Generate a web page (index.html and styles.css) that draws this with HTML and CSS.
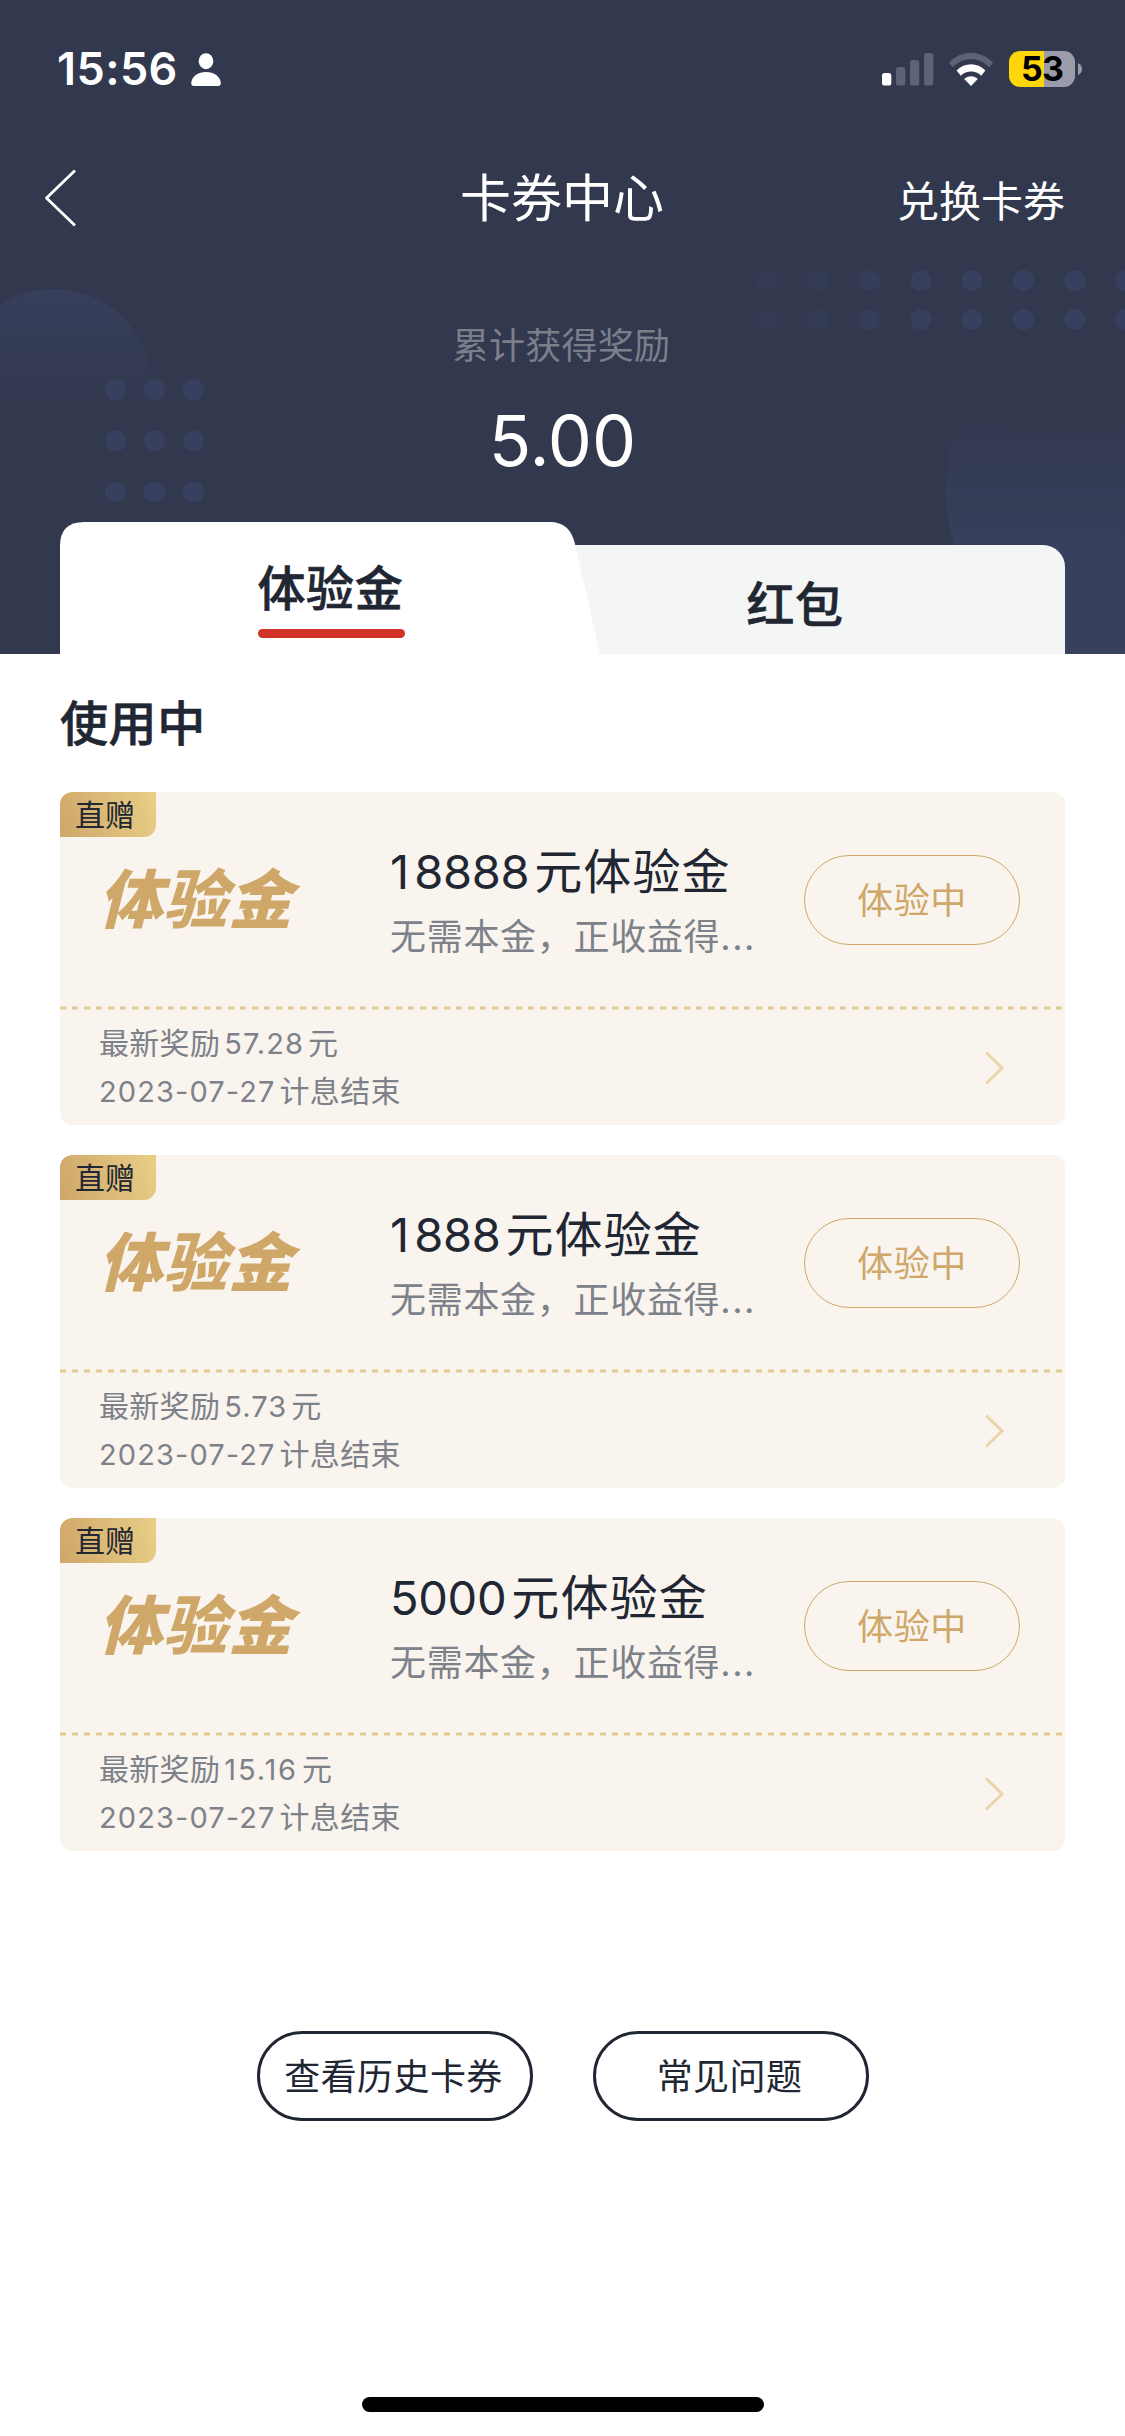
FILE: index.html
```html
<!DOCTYPE html>
<html lang="zh-CN">
<head>
<meta charset="utf-8">
<title>卡券中心</title>
<link rel="stylesheet" href="styles.css">
</head>
<body>
<header class="hero">
  <svg class="hero-art" width="1125" height="654" viewBox="0 0 1125 654" aria-hidden="true">
    <defs>
      <linearGradient id="fadeDown" gradientUnits="userSpaceOnUse" x1="0" y1="288" x2="0" y2="425">
        <stop offset="0" stop-color="#373f5c"/><stop offset="1" stop-color="#363d59" stop-opacity="0"/>
      </linearGradient>
      <linearGradient id="fadeUp" gradientUnits="userSpaceOnUse" x1="0" y1="400" x2="0" y2="560">
        <stop offset="0" stop-color="#37405d" stop-opacity="0"/><stop offset="1" stop-color="#37405d"/>
      </linearGradient>
      <linearGradient id="fadeLeft" gradientUnits="userSpaceOnUse" x1="690" y1="0" x2="970" y2="0">
        <stop offset="0" stop-color="#37415f" stop-opacity="0"/><stop offset="1" stop-color="#37415f"/>
      </linearGradient>
    </defs>
    <circle cx="54" cy="387" r="98" fill="url(#fadeDown)"/>
    <circle cx="1136" cy="490" r="190" fill="url(#fadeUp)"/>
    <path d="M946 491H1125" stroke="#38425f" stroke-width="4" opacity=".6"/>
    <g fill="#37415f">
      <circle cx="115.5" cy="389.7" r="10.6"/><circle cx="154.5" cy="389.7" r="10.6"/><circle cx="193.5" cy="389.7" r="10.6"/>
      <circle cx="115.5" cy="441" r="10.6"/><circle cx="154.5" cy="441" r="10.6"/><circle cx="193.5" cy="441" r="10.6"/>
      <circle cx="115.5" cy="492" r="10.6"/><circle cx="154.5" cy="492" r="10.6"/><circle cx="193.5" cy="492" r="10.6"/>
    </g>
    <g fill="url(#fadeLeft)">
      <circle cx="715.5" cy="280.7" r="10.5"/><circle cx="767" cy="280.7" r="10.5"/><circle cx="818" cy="280.7" r="10.5"/><circle cx="869.5" cy="280.7" r="10.5"/><circle cx="921" cy="280.7" r="10.5"/><circle cx="972" cy="280.7" r="10.5"/><circle cx="1023.5" cy="280.7" r="10.5"/><circle cx="1075" cy="280.7" r="10.5"/><circle cx="1126" cy="280.7" r="10.5"/>
      <circle cx="715.5" cy="319.6" r="10.5"/><circle cx="767" cy="319.6" r="10.5"/><circle cx="818" cy="319.6" r="10.5"/><circle cx="869.5" cy="319.6" r="10.5"/><circle cx="921" cy="319.6" r="10.5"/><circle cx="972" cy="319.6" r="10.5"/><circle cx="1023.5" cy="319.6" r="10.5"/><circle cx="1075" cy="319.6" r="10.5"/><circle cx="1126" cy="319.6" r="10.5"/>
    </g>
  </svg>

  <div class="status">
    <div class="status-left">
      <span class="clock">15:56</span>
      <svg width="30" height="33" viewBox="0 0 30 33" fill="#fff"><ellipse cx="15" cy="8.2" rx="7.3" ry="8"/><path d="M3 33Q.2 33 .2 30C.6 23.600 7 19 15 19S29.400 23.600 29.800 30Q29.800 33 27 33Z"/></svg>
    </div>
    <div class="status-right">
      <svg width="52" height="33" viewBox="0 0 52 33" fill="#5d6274"><rect y="20" width="9.300" height="12.500" rx="2.600" fill="#fff"/><rect x="14" y="14" width="9.300" height="18.500" rx="2.600"/><rect x="28" y="7" width="9.300" height="25.500" rx="2.600"/><rect x="42" width="9.300" height="32.500" rx="2.600"/></svg>
      <svg class="wifi" width="46" height="34" viewBox="0 0 46 34">
        <path d="M.9 10.800C13-2.600 33-2.600 45.100 10.800L41.200 15.200C31 4.600 15 4.600 4.800 15.200Z" fill="#5d6274"/>
        <path d="M8.600 18.500C16.500 10 29.500 10 37.400 18.500L33.200 23.700C27.500 18.200 18.500 18.200 12.800 23.700Z" fill="#fff"/>
        <path d="M16.200 27.100C20 23.400 26 23.400 29.800 27.100L23 34Z" fill="#fff"/>
      </svg>
      <span class="battery">53</span>
      <svg width="4" height="12" viewBox="0 0 4 12"><path d="M0 0Q4 2 4 6T0 12Z" fill="#9a9ca9"/></svg>
    </div>
  </div>

  <nav class="nav">
    <svg class="back" width="32" height="58" viewBox="0 0 32 58" fill="none" stroke="#fff" stroke-width="2.800"><path d="M30 1.500L1.500 29L30 56.500"/></svg>
    <h1 class="nav-title">卡券中心</h1>
    <span class="nav-action">兑换卡券</span>
  </nav>

  <div class="reward">
    <div class="reward-label">累计获得奖励</div>
    <div class="reward-value">5.00</div>
  </div>

  <div class="tabs">
    <div class="tab tab-active"><span class="tab-label">体验金</span></div>
    <div class="tab tab-idle"><span class="tab-label">红包</span></div>
  </div>
</header>

<main class="content">
  <h2 class="section-title">使用中</h2>
  <div class="cards">
    <article class="card">
      <div class="badge">直赠</div>
      <div class="card-main">
        <div class="logo">体验金</div>
        <div class="info">
          <div class="name"><span class="num"><span class="one">1</span>8888</span>元体验金</div>
          <div class="desc">无需本金，正收益得<span class="dots">...</span></div>
        </div>
        <div class="state">体验中</div>
      </div>
      <svg class="rule" width="1005" height="4" viewBox="0 0 1005 4"><path d="M0 2H1005" stroke="#e2cb93" stroke-width="3" stroke-dasharray="6 6"/></svg>
      <div class="card-foot">
        <div class="notes">
          <div>最新奖励<span class="fig">57.28</span>元</div>
          <div><span class="fig date">2023-07-27</span>计息结束</div>
        </div>
        <svg width="20" height="34" viewBox="0 0 20 34" fill="none" stroke="#ead5aa" stroke-width="3"><path d="M2 1.500L18 17L2 32.500"/></svg>
      </div>
    </article>
    <article class="card">
      <div class="badge">直赠</div>
      <div class="card-main">
        <div class="logo">体验金</div>
        <div class="info">
          <div class="name"><span class="num"><span class="one">1</span>888</span>元体验金</div>
          <div class="desc">无需本金，正收益得<span class="dots">...</span></div>
        </div>
        <div class="state">体验中</div>
      </div>
      <svg class="rule" width="1005" height="4" viewBox="0 0 1005 4"><path d="M0 2H1005" stroke="#e2cb93" stroke-width="3" stroke-dasharray="6 6"/></svg>
      <div class="card-foot">
        <div class="notes">
          <div>最新奖励<span class="fig">5.73</span>元</div>
          <div><span class="fig date">2023-07-27</span>计息结束</div>
        </div>
        <svg width="20" height="34" viewBox="0 0 20 34" fill="none" stroke="#ead5aa" stroke-width="3"><path d="M2 1.500L18 17L2 32.500"/></svg>
      </div>
    </article>
    <article class="card">
      <div class="badge">直赠</div>
      <div class="card-main">
        <div class="logo">体验金</div>
        <div class="info">
          <div class="name"><span class="num">5000</span>元体验金</div>
          <div class="desc">无需本金，正收益得<span class="dots">...</span></div>
        </div>
        <div class="state">体验中</div>
      </div>
      <svg class="rule" width="1005" height="4" viewBox="0 0 1005 4"><path d="M0 2H1005" stroke="#e2cb93" stroke-width="3" stroke-dasharray="6 6"/></svg>
      <div class="card-foot">
        <div class="notes">
          <div>最新奖励<span class="fig wide">15.16</span>元</div>
          <div><span class="fig date">2023-07-27</span>计息结束</div>
        </div>
        <svg width="20" height="34" viewBox="0 0 20 34" fill="none" stroke="#ead5aa" stroke-width="3"><path d="M2 1.500L18 17L2 32.500"/></svg>
      </div>
    </article>
  </div>
  <div class="links">
    <div class="link">查看历史卡券</div>
    <div class="link">常见问题</div>
  </div>
</main>
<div class="home-bar"></div>
</body>
</html>
```
FILE: styles.css
```css
* { box-sizing: border-box; margin: 0; padding: 0; }
svg { display: block; flex: none; }

body {
  width: 1125px;
  height: 2436px;
  display: flex;
  flex-direction: column;
  align-items: center;
  overflow: hidden;
  background: #fff;
  color: #212633;
  font-family: "Noto Sans CJK SC", sans-serif;
  white-space: nowrap;
}

/* Header */
.hero {
  position: relative;
  width: 1125px;
  height: 654px;
  flex: none;
  display: flex;
  flex-direction: column;
  background: #32384d;
  color: #fff;
}
.hero-art { position: absolute; left: 0; top: 0; z-index: 0; }
.status, .nav, .reward, .tabs { z-index: 1; }

.status {
  height: 132px;
  padding: 6px 43px 0 57px;
  display: flex;
  align-items: center;
  justify-content: space-between;
}
.status-left { display: flex; align-items: center; gap: 13px; }
.clock { font: 600 45px/60px Inter, sans-serif; letter-spacing: 0.4px; }
.status-right { display: flex; align-items: center; }
.wifi { margin: 0 15px 0 14px; }
.battery {
  width: 66px;
  height: 36px;
  margin-right: 3px;
  border-radius: 11px;
  background: linear-gradient(90deg, #ffd60a 35px, #9a9ca9 35px);
  color: #000;
  font: 650 34px/36px Inter, sans-serif;
  letter-spacing: -0.8px;
  text-align: center;
}

.nav {
  height: 132px;
  padding: 0 60px 0 45px;
  display: grid;
  grid-template-columns: 1fr auto 1fr;
  align-items: center;
}
.nav-title { padding-bottom: 6px; font-size: 51px; line-height: 60px; font-weight: 400; margin-left: 14px; }
.nav-action { justify-self: end; font-size: 42px; line-height: 60px; padding-top: 2px; }

.reward { text-align: center; padding-top: 49px; }
.reward-label { font-size: 36px; line-height: 60px; letter-spacing: 0.3px; padding-right: 2px; color: #7b7f8b; }
.reward-value { margin-top: 28px; font: 400 70px/80px Inter, sans-serif; }

.tabs { margin: auto 60px 0; display: flex; align-items: flex-end; }
.tab { display: flex; justify-content: center; color: #212633; }
.tab-label,
.section-title {
  font-size: 48px;
  line-height: 60px;
  font-weight: 500;
  letter-spacing: 0.6px;
  -webkit-text-stroke: 0.6px currentColor;
}
.tab-active {
  width: 540px;
  height: 132px;
  padding: 33px 0 0 2px;
  background: #fff;
  clip-path: path("M0 132V24Q0 0 24 0H490Q510 0 515 22L540 132Z");
  z-index: 1;
}
.tab-active .tab-label { display: flex; flex-direction: column; }
.tab-active .tab-label::after {
  content: "";
  width: 147px;
  height: 9px;
  margin-top: 14px;
  border-radius: 4.5px;
  background: #d13228;
}
.tab-idle {
  width: 525px;
  height: 109px;
  margin-left: -60px;
  padding: 26px 15px 0 0;
  border-radius: 0 22px 0 0;
  background: #f4f6f5;
}

/* Coupon list */
.content { width: 1005px; }
.section-title { margin-top: 36px; }
.cards { margin-top: 42px; display: flex; flex-direction: column; gap: 30px; }
.card {
  position: relative;
  height: 333px;
  border-radius: 12px;
  background: #f9f4ee;
  overflow: hidden;
}
.badge {
  position: absolute;
  left: 0;
  top: 0;
  width: 96px;
  height: 45px;
  padding-left: 15px;
  border-radius: 12px 0 12px 0;
  background: linear-gradient(75deg, #cfa669, #e8cf86);
  font-size: 30px;
  line-height: 43px;
}
.card-main { height: 214px; padding: 46px 45px 0; display: flex; align-items: flex-start; }
.logo {
  width: 285px;
  margin-top: 20px;
  font-size: 64px;
  line-height: 75px;
  font-weight: 900;
  letter-spacing: 1px;
  color: #cfa769;
  transform: skewX(-14deg);
  transform-origin: left center;
}
.info { width: 414px; }
.name { font-size: 48px; line-height: 60px; letter-spacing: 1.1px; }
.num { font-family: Inter, sans-serif; font-size: 47px; letter-spacing: -0.3px; margin-right: 5px; }
.one { letter-spacing: 5px; }
.desc { margin-top: 7px; font-size: 36px; line-height: 50px; letter-spacing: 0.7px; color: #7d8189; }
.dots { font-family: Inter, sans-serif; letter-spacing: 1.5px; }
.state {
  width: 216px;
  height: 90px;
  margin-top: 17px;
  border: 1.5px solid #cfa769;
  border-radius: 45px;
  font-size: 36px;
  line-height: 84px;
  letter-spacing: 0.7px;
  text-align: center;
  color: #cfa769;
}
.card-foot { height: 115px; padding: 0 61px 0 39px; display: flex; justify-content: space-between; align-items: center; }
.notes { padding-bottom: 6px; font-size: 30px; line-height: 48px; letter-spacing: 0.3px; color: #7d8189; }
.notes > div { height: 48px; }
.fig { font-family: Inter, sans-serif; font-size: 29px; line-height: 1; letter-spacing: 1.1px; margin: 0 4px; }
.wide { letter-spacing: 1.9px; }
.date { margin-left: 0; }

.links { margin-top: 180px; display: flex; justify-content: center; gap: 60px; }
.link {
  width: 276px;
  height: 90px;
  padding-right: 2px;
  border: 3px solid #212633;
  border-radius: 45px;
  font-size: 36px;
  line-height: 81px;
  letter-spacing: 0.4px;
  text-align: center;
}

.home-bar { width: 402px; height: 15px; margin: auto 0 24px; border-radius: 8px; background: #000; }
```
